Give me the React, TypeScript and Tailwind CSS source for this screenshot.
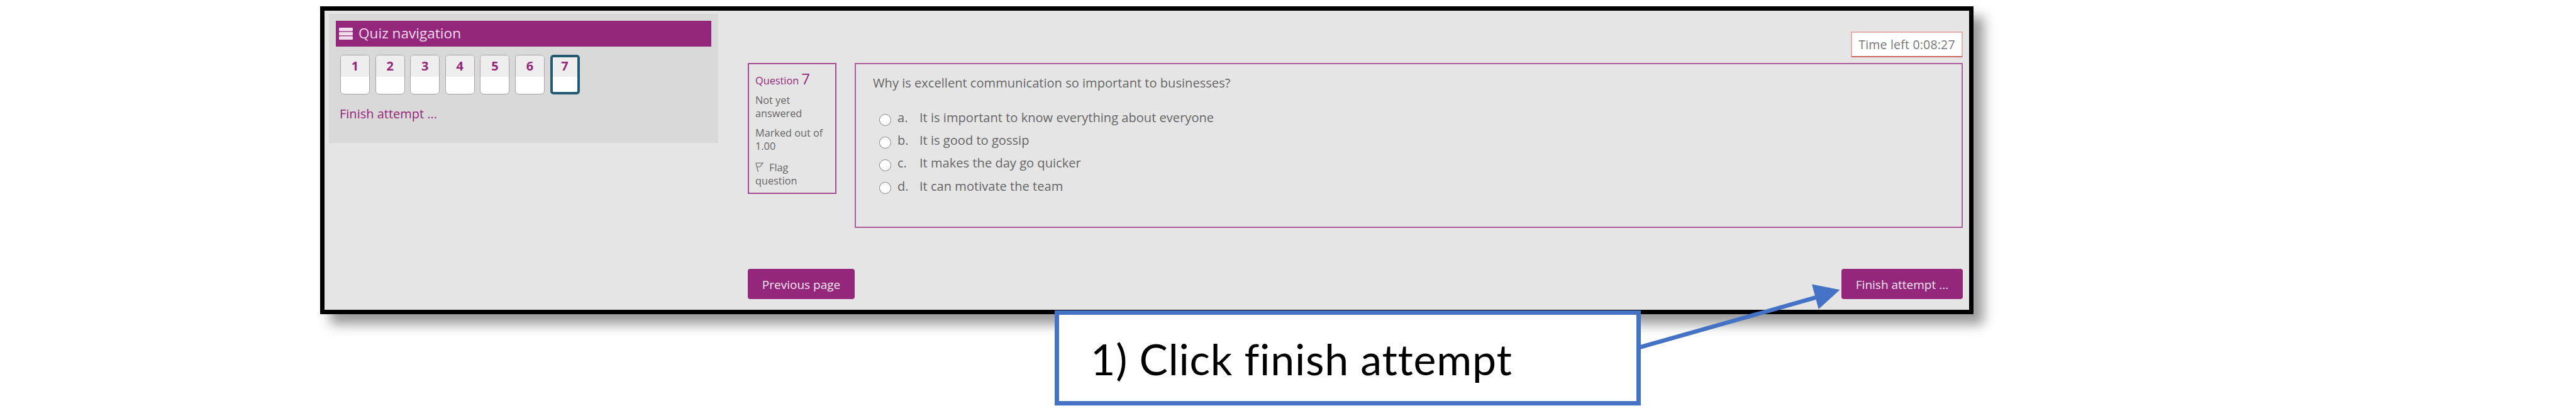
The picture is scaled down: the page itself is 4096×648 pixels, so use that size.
import React from "react";

const quizNumbers = [1, 2, 3, 4, 5, 6, 7];

const answers = [
  { key: "a.", text: "It is important to know everything about everyone" },
  { key: "b.", text: "It is good to gossip" },
  { key: "c.", text: "It makes the day go quicker" },
  { key: "d.", text: "It can motivate the team" },
];

function Sidebar() {
  return (
    <aside className="h-[205px] w-[619px] shrink-0 bg-[#d9d9d9] px-[11px] pt-[11px]">
      <div className="flex h-[41px] w-[597px] items-center bg-[#94277b] pl-[5px] text-[#f1dcec]">
        <svg width="22" height="19" viewBox="0 0 22 19" fill="currentColor">
          <rect x="0" y="0" width="22" height="5.4" rx="1" />
          <rect x="0" y="6.8" width="22" height="5.4" rx="1" />
          <rect x="0" y="13.6" width="22" height="5.4" rx="1" />
        </svg>
        <h2 className="ml-[9px] text-[22.6px] leading-none whitespace-nowrap">Quiz navigation</h2>
      </div>
      <div className="mt-[13px] ml-[7px] flex gap-[8.6px]">
        {quizNumbers.map((n) => (
          <button
            key={n}
            className={
              n === 7
                ? "flex h-[63px] w-[47px] flex-col overflow-hidden rounded-[5px] border-[4px] border-[#235a73] bg-white"
                : "flex h-[63px] w-[47px] flex-col overflow-hidden rounded-[6px] border border-[#a6a6a6] bg-white"
            }
          >
            <span
              className={
                n === 7
                  ? "flex h-[31px] w-full items-center justify-center bg-[#eeeeee] pb-[4px] text-[20px] leading-none font-bold text-[#94277b]"
                  : "flex h-[34px] w-full items-center justify-center bg-[#eeeeee] pb-[1px] text-[20px] leading-none font-bold text-[#94277b]"
              }
            >
              {n}
            </span>
          </button>
        ))}
      </div>
      <a className="mt-[17px] ml-[6px] block text-[20px] leading-[28px] whitespace-nowrap text-[#94277b]">Finish attempt ...</a>
    </aside>
  );
}

function QuestionInfo() {
  return (
    <div className="h-[208px] w-[141px] shrink-0 border-2 border-[#a54a90] pt-[7px] pl-[10px] text-[16.3px] leading-[20.5px] text-[#666]">
      <div className="flex h-[32px] items-baseline gap-[4px] whitespace-nowrap text-[#94277b]">
        <span>Question</span>
        <span className="text-[24px] leading-[32px] font-medium">7</span>
      </div>
      <div className="mt-[8px]">
        <div>Not yet</div>
        <div>answered</div>
      </div>
      <div className="mt-[11px]">
        <div>Marked out of</div>
        <div>1.00</div>
      </div>
      <div className="mt-[14px]">
        <div className="flex h-[20.5px] items-center">
          <svg width="13" height="16" viewBox="0 0 13 16" fill="none" stroke="#8a8a8a" strokeWidth="1.6" className="mr-[9px]">
            <path d="M0.5 1H12L9.5 4.5L7 7H2.5M1 1L4.5 15" />
          </svg>
          <span>Flag</span>
        </div>
        <div>question</div>
      </div>
    </div>
  );
}

function QuestionPanel() {
  return (
    <div className="h-[262px] w-[1762px] shrink-0 border-2 border-[#ad5c9b] pt-[16px] pl-[27px] text-[20.1px] text-[#666]">
      <p className="leading-[28px] whitespace-nowrap">Why is excellent communication so important to businesses?</p>
      <div className="mt-[23px] flex flex-col">
        {answers.map((a) => (
          <label key={a.key} className="flex h-[36.2px] items-center pl-[10px]">
            <span className="mt-[6px] h-[19px] w-[19px] rounded-full border-[1.5px] border-[#858585] bg-white" />
            <span className="ml-[10px] w-[35px]">{a.key}</span>
            <span className="whitespace-nowrap">{a.text}</span>
          </label>
        ))}
      </div>
    </div>
  );
}

export default function App() {
  return (
    <div className="relative h-[648px] w-[4096px] overflow-hidden bg-white pt-[10px] pl-[509px] font-['Open_Sans',sans-serif]">
      <main className="flex h-[489px] w-[2629px] border-[7px] border-black bg-[#e5e5e5] shadow-[16px_16px_18px_rgba(0,0,0,0.4)]">
        <div className="pt-[5px] pl-[7px]">
          <Sidebar />
        </div>
        <section className="ml-[47px] flex w-[1932px] flex-col pt-[33px]">
          <div className="ml-auto flex h-[41px] w-[178px] items-center justify-center border-2 border-[#e3b0aa] border-b-[#c9655c] bg-white text-[19.5px] tracking-[0.2px] whitespace-nowrap text-[#777]">
            Time left 0:08:27
          </div>
          <div className="mt-[9px] flex justify-between">
            <QuestionInfo />
            <QuestionPanel />
          </div>
          <div className="mt-[65px] flex justify-between text-[19px] font-medium text-[#f7e6f3]">
            <button className="h-[48px] w-[170px] rounded-[4px] bg-[#94277b] pt-[2px] whitespace-nowrap">Previous page</button>
            <button className="h-[48px] w-[193px] rounded-[4px] bg-[#94277b] pt-[2px] whitespace-nowrap">Finish attempt ...</button>
          </div>
        </section>
      </main>
      <svg className="absolute top-[440px] left-[2600px]" width="340" height="130" viewBox="2600 440 340 130">
        <path d="M2605 552.3L2887 472.5" stroke="#4472c4" strokeWidth="6.6" fill="none" />
        <path d="M2881 451.5L2925.5 460.3L2891.7 491Z" fill="#4472c4" />
      </svg>
      <div className="absolute top-[493px] left-[1677px] flex h-[151px] w-[932px] items-center border-[7px] border-[#4472c4] bg-white pt-[2px] pl-[50px] font-['Lato',sans-serif] text-[68px] leading-none tracking-[0.8px] whitespace-nowrap text-black [font-variant-ligatures:none]">
        1) Click finish attempt
      </div>
    </div>
  );
}
